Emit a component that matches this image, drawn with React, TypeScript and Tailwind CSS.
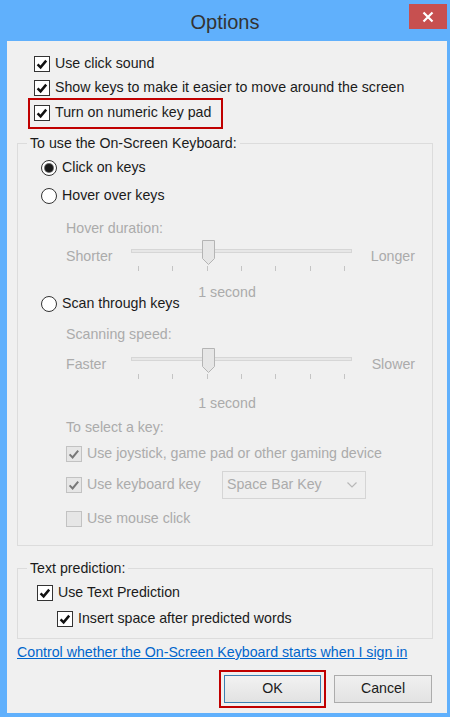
import React from 'react';

const font = { fontFamily: '"Liberation Sans", Arial, sans-serif' };

function Check({ checked, disabled }: { checked: boolean; disabled?: boolean }) {
  return (
    <span
      className={`flex w-[16px] h-[16px] shrink-0 items-center justify-center border ${
        disabled ? 'border-[#c2c2c2] bg-[#e6e6e6]' : 'border-[#333333] bg-white'
      }`}
    >
      {checked && (
        <svg width="14" height="14" viewBox="0 0 14 14">
          <path
            d="M2.6 7.4 L5.6 10.4 L11.2 3.6"
            fill="none"
            stroke={disabled ? '#777777' : '#111111'}
            strokeWidth={disabled ? 2 : 2.5}
          />
        </svg>
      )}
    </span>
  );
}

function Radio({ selected }: { selected: boolean }) {
  return (
    <span className="flex w-[16px] h-[16px] shrink-0 items-center justify-center rounded-full border border-[#333333] bg-white">
      {selected && <span className="w-[8px] h-[8px] rounded-full bg-[#1a1a1a] ring-1 ring-[#6b6b6b]" />}
    </span>
  );
}

function Slider({ left, right }: { left: string; right: string }) {
  return (
    <div className="flex h-[32px] pl-[48px] pr-[17px] text-[#ababab]">
      <div className="w-[65px] mt-[6px] h-[20px] leading-[20px]">{left}</div>
      <div className="relative w-[221px]">
        <div className="mt-[9px] h-[4px] border border-[#d6d6d6] bg-[#e7e7e7]" />
        <div className="mt-[13px] flex h-[5px] justify-between px-[7px]">
          {[0, 1, 2, 3, 4, 5, 6].map(i => (
            <span key={i} className="w-px h-[5px] bg-[#c4c4c4]" />
          ))}
        </div>
        <svg className="absolute left-[71px] top-0" width="13" height="25" viewBox="0 0 13 25">
          <path d="M0.5 0.5 H12.5 V18.5 L6.5 24.5 L0.5 18.5 Z" fill="#e6e6e6" stroke="#b4b4b4" />
        </svg>
      </div>
      <div className="flex-1 text-right mt-[6px] h-[20px] leading-[20px]">{right}</div>
    </div>
  );
}

export default function App() {
  return (
    <div
      className="w-[450px] h-[717px] bg-[#60b0fc] flex flex-col text-[14.2px] text-[#1b1b1b] overflow-hidden"
      style={font}
    >
      {/* Заголовок окна */}
      <div className="relative h-[41px] shrink-0 flex items-center justify-center">
        <span className="text-[20px] text-[#333333] pt-[3px]">Options</span>
        <div className="absolute right-[3px] top-[4px] w-[38px] h-[25px] bg-[#c75050] flex items-center justify-center">
          <svg width="12" height="12" viewBox="0 0 12 12">
            <path d="M1.5 1.5 L10.5 10.5 M10.5 1.5 L1.5 10.5" stroke="#ffffff" strokeWidth="2.2" />
          </svg>
        </div>
      </div>

      {/* Содержимое */}
      <div className="ml-[7px] mr-[3px] mb-[4px] flex-1 bg-[#f0f0f0] flex flex-col pt-[11px]">
        <div className="flex items-center h-[24px] pl-[27px] gap-[5px]">
          <Check checked />
          <span>Use click sound</span>
        </div>
        <div className="flex items-center h-[24px] pl-[27px] gap-[5px]">
          <Check checked />
          <span>Show keys to make it easier to move around the screen</span>
        </div>
        <div className="-mt-[2px] ml-[21px] w-[195px] h-[31px] pb-[2px] border-2 border-[#c00000] flex items-center pl-[4px] gap-[5px]">
          <Check checked />
          <span>Turn on numeric key pad</span>
        </div>

        {/* Группа клавиатуры */}
        <fieldset className="mt-[5px] ml-[10px] w-[416px] border border-[#dcdcdc] pb-[14px]">
          <legend className="ml-[9px] px-[3px] h-[18px] leading-[18px]">To use the On-Screen Keyboard:</legend>
          <div className="mt-[2px] flex items-center h-[28px] pl-[23px] gap-[5px]">
            <Radio selected />
            <span>Click on keys</span>
          </div>
          <div className="flex items-center h-[28px] pl-[23px] gap-[5px]">
            <Radio selected={false} />
            <span>Hover over keys</span>
          </div>
          <div className="mt-[8px] h-[20px] leading-[20px] pl-[48px] text-[#ababab]">Hover duration:</div>
          <div className="mt-[2px]">
            <Slider left="Shorter" right="Longer" />
          </div>
          <div className="mt-[12px] h-[16px] leading-[16px] text-center text-[#ababab] pl-[4px]">1 second</div>
          <div className="-mt-[6px] flex items-center h-[20px] pl-[23px] gap-[5px]">
            <Radio selected={false} />
            <span>Scan through keys</span>
          </div>
          <div className="mt-[10px] h-[20px] leading-[20px] pl-[48px] text-[#ababab]">Scanning speed:</div>
          <div className="mt-[4px]">
            <Slider left="Faster" right="Slower" />
          </div>
          <div className="mt-[13px] h-[20px] leading-[20px] text-center text-[#ababab] pl-[4px]">1 second</div>
          <div className="mt-[4px] h-[20px] leading-[20px] pl-[48px] text-[#ababab]">To select a key:</div>
          <div className="mt-[5px] flex items-center h-[24px] pl-[48px] gap-[5px] text-[#ababab]">
            <Check checked disabled />
            <span>Use joystick, game pad or other gaming device</span>
          </div>
          <div className="mt-[5px] flex items-center h-[28px] pl-[48px] text-[#ababab]">
            <Check checked disabled />
            <span className="ml-[5px] w-[135px]">Use keyboard key</span>
            <div className="w-[144px] h-[28px] border border-[#d5d5d5] bg-[#efefef] flex items-center justify-between pl-[4px] pr-[8px]">
              <span>Space Bar Key</span>
              <svg width="10" height="6" viewBox="0 0 10 6">
                <path d="M0.5 0.5 L5 5 L9.5 0.5" fill="none" stroke="#b8b8b8" strokeWidth="1.2" />
              </svg>
            </div>
          </div>
          <div className="mt-[8px] flex items-center h-[24px] pl-[48px] gap-[5px] text-[#ababab]">
            <Check checked={false} disabled />
            <span>Use mouse click</span>
          </div>
        </fieldset>

        {/* Предсказание текста */}
        <fieldset className="mt-[13px] ml-[10px] w-[416px] border border-[#dcdcdc] pb-[7px]">
          <legend className="ml-[9px] px-[3px] h-[18px] leading-[18px]">Text prediction:</legend>
          <div className="mt-[4px] flex items-center h-[24px] pl-[19px] gap-[5px]">
            <Check checked />
            <span>Use Text Prediction</span>
          </div>
          <div className="mt-[2px] flex items-center h-[24px] pl-[39px] gap-[5px]">
            <Check checked />
            <span>Insert space after predicted words</span>
          </div>
        </fieldset>

        <div className="mt-[3px] ml-[10px] h-[20px] leading-[20px]">
          <span className="text-[#0066cc] underline">Control whether the On-Screen Keyboard starts when I sign in</span>
        </div>

        <div className="mt-[8px] mr-[15px] flex items-center justify-end gap-[8px]">
          <div className="border-2 border-[#c00000] p-[3px]">
            <button className="w-[97px] h-[28px] border border-[#3c7fb1] bg-gradient-to-b from-[#f2f2f2] to-[#e2e2e2] text-[#1b1b1b]">
              OK
            </button>
          </div>
          <button className="w-[98px] h-[28px] border border-[#acacac] bg-gradient-to-b from-[#f0f0f0] to-[#e3e3e3] text-[#1b1b1b]">
            Cancel
          </button>
        </div>
      </div>
    </div>
  );
}
